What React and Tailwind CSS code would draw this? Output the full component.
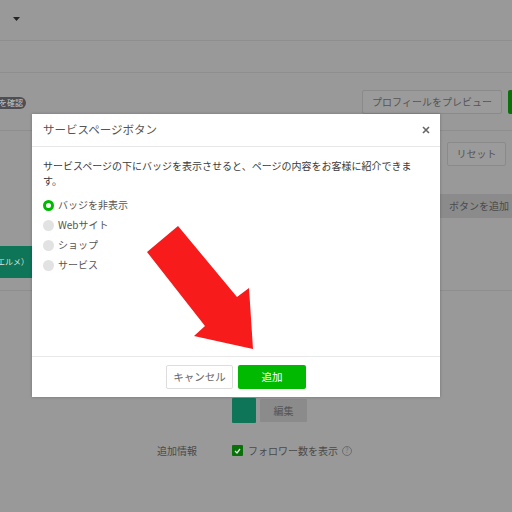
import React from "react";

function Radio({ checked, label }) {
  return (
    <div className="flex h-[20px] items-center">
      {checked ? (
        <div className="h-[11px] w-[11px] rounded-full border-[3px] border-[#00b900] bg-white" />
      ) : (
        <div className="h-[11px] w-[11px] rounded-full bg-[#e2e2e2]" />
      )}
      <span className="ml-[4px] text-[10px] leading-none text-[#555555]">{label}</span>
    </div>
  );
}

export default function App() {
  return (
    <div className="relative h-[512px] w-[512px] overflow-hidden bg-[#999999] font-['Noto_Sans_CJK_JP','Noto_Sans',sans-serif]">
      {/* dimmed page behind */}
      <div className="flex flex-col">
        <div className="h-[41px] border-b border-[#8e8e8e] pl-[13px] pt-[17px]">
          <svg width="7" height="4" viewBox="0 0 7 4">
            <polygon points="0,0 7,0 3.5,4" fill="#252525" />
          </svg>
        </div>
        <div className="h-[32px] border-b border-[#8e8e8e]" />
        <div className="flex h-[58px] items-center justify-between border-b border-[#8e8e8e]">
          <div className="mt-[3px] flex h-[12px] w-[26px] items-center justify-end overflow-hidden rounded-r-full bg-[#4e4e55] pr-[3px]">
            <span className="whitespace-nowrap text-[8px] leading-none text-[#c8c8c8]">内容を確認</span>
          </div>
          <div className="flex items-center gap-[6px]">
            <div className="flex h-[24px] w-[140px] items-center justify-center rounded-[2px] border border-[#8a8a8a] bg-[#9b9b9b]">
              <span className="text-[10px] leading-none text-[#555555]">プロフィールをプレビュー</span>
            </div>
            <div className="h-[24px] w-[4px] rounded-l-[2px] bg-[#0a700a]" />
          </div>
        </div>
        <div className="flex flex-col">
          <div className="mr-[6px] mt-[11px] flex h-[24px] w-[59px] items-center justify-center self-end rounded-[2px] border border-[#8a8a8a] bg-[#9b9b9b]">
            <span className="text-[10px] leading-none text-[#555555]">リセット</span>
          </div>
          <div className="mt-[28px] flex h-[24px] w-[72px] items-center justify-end self-end bg-[#8b8b8b] pr-[3px]">
            <span className="whitespace-nowrap text-[10px] leading-none text-[#4a4a4a]">ボタンを追加</span>
          </div>
          <div className="mt-[28px] flex h-[32px] w-[32px] items-center justify-end overflow-hidden bg-[#0e7558] pr-[3px]">
            <span className="whitespace-nowrap text-[8px] leading-none text-[#d5e6de]">（エルメ）</span>
          </div>
          <div className="mt-[12px] h-px bg-[#8e8e8e]" />
          <div className="mt-[107px] flex pl-[232px]">
            <div className="h-[25px] w-[24px] rounded-[1px] bg-[#0e7558]" />
            <div className="ml-[4px] mt-[1px] flex h-[23px] w-[47px] items-center justify-center rounded-[1px] bg-[#8b8b8b]">
              <span className="text-[10px] leading-none text-[#555555]">編集</span>
            </div>
          </div>
          <div className="mt-[21px] flex h-[13px] items-center">
            <span className="ml-[157px] w-[75px] text-[10px] leading-none text-[#4a4a4a]">追加情報</span>
            <div className="flex h-[11px] w-[11px] items-center justify-center rounded-[1px] bg-[#0a700a]">
              <svg width="7" height="6" viewBox="0 0 7 6">
                <polyline points="1,3 3,5 6,1" fill="none" stroke="#d8e8d8" strokeWidth="1.3" />
              </svg>
            </div>
            <span className="ml-[5px] text-[10px] leading-none text-[#4a4a4a]">フォロワー数を表示</span>
            <div className="ml-[4px] flex h-[10px] w-[10px] items-center justify-center rounded-full border border-[#6e6e6e]">
              <span className="text-[7px] leading-none text-[#6e6e6e]">?</span>
            </div>
          </div>
        </div>
      </div>

      {/* modal */}
      <div className="absolute left-[32px] top-[114px] flex h-[283px] w-[408px] flex-col bg-white shadow-[0_0_3px_rgba(0,0,0,0.25)]">
        <div className="flex h-[33px] items-center justify-between border-b border-[#e8e8e8] pl-[11px] pr-[10px]">
          <span className="text-[11.5px] leading-none text-[#555555]">サービスページボタン</span>
          <svg width="8" height="8" viewBox="0 0 8 8">
            <path d="M1 1 L7 7 M7 1 L1 7" stroke="#666666" strokeWidth="1.6" />
          </svg>
        </div>
        <div className="flex flex-1 flex-col pl-[11px] pt-[11px]">
          <p className="w-[376px] text-[10px] leading-[15px] text-[#3a3a3a]">
            サービスページの下にバッジを表示させると、ページの内容をお客様に紹介できます。
          </p>
          <div className="mt-[7px] flex flex-col">
            <Radio checked label="バッジを非表示" />
            <Radio label="Webサイト" />
            <Radio label="ショップ" />
            <Radio label="サービス" />
          </div>
        </div>
        <div className="flex h-[41px] justify-center gap-[5px] border-t border-[#e8e8e8] pt-[8px]">
          <div className="flex h-[24px] w-[67px] items-center justify-center rounded-[2px] border border-[#dddddd] bg-white">
            <span className="text-[10.5px] leading-none text-[#666666]">キャンセル</span>
          </div>
          <div className="flex h-[24px] w-[68px] items-center justify-center rounded-[2px] bg-[#00b900]">
            <span className="text-[10.5px] leading-none text-white">追加</span>
          </div>
        </div>
      </div>

      {/* annotation arrow */}
      <svg className="pointer-events-none absolute left-0 top-0" width="512" height="512" viewBox="0 0 512 512">
        <polygon
          points="147,252 178,226 237,297 249,288 253,349 194,336 205,326"
          fill="#f71b1b"
        />
      </svg>
    </div>
  );
}
